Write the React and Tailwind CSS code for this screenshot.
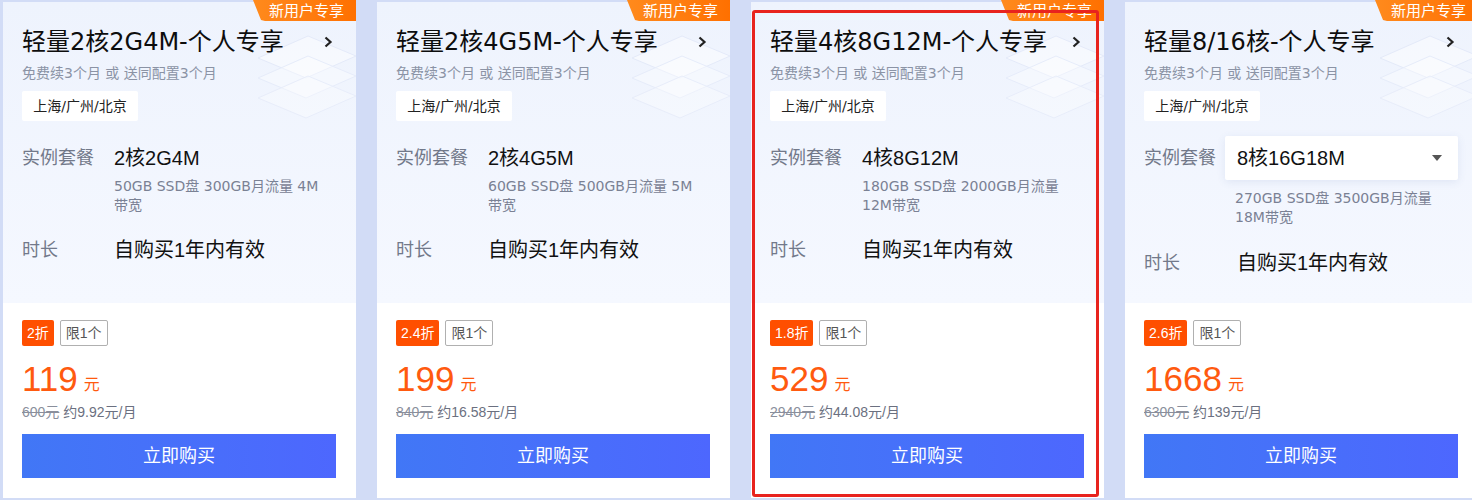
import React from "react";

const plans = [
  {
    title: "轻量2核2G4M-个人专享",
    spec: "2核2G4M",
    desc: "50GB SSD盘 300GB月流量 4M 带宽",
    discount: "2折",
    price: "119",
    orig: "600元",
    monthly: "约9.92元/月",
  },
  {
    title: "轻量2核4G5M-个人专享",
    spec: "2核4G5M",
    desc: "60GB SSD盘 500GB月流量 5M 带宽",
    discount: "2.4折",
    price: "199",
    orig: "840元",
    monthly: "约16.58元/月",
  },
  {
    title: "轻量4核8G12M-个人专享",
    spec: "4核8G12M",
    desc: "180GB SSD盘 2000GB月流量 12M带宽",
    discount: "1.8折",
    price: "529",
    orig: "2940元",
    monthly: "约44.08元/月",
    selected: true,
  },
  {
    title: "轻量8/16核-个人专享",
    spec: "8核16G18M",
    desc: "270GB SSD盘 3500GB月流量 18M带宽",
    discount: "2.6折",
    price: "1668",
    orig: "6300元",
    monthly: "约139元/月",
    dropdown: true,
  },
];

// wide latin face, closer to the reference's metrics for small text
const wide = "font-['DejaVu_Sans','Noto_Sans_CJK_SC',sans-serif]";

function Decoration() {
  // faint stacked server plates behind the title
  return (
    <svg className="absolute right-0 top-[22px]" width="112" height="100" viewBox="0 0 112 100" fill="none">
      <path d="M14 34 L64 12 L112 32 L62 54 Z" fill="#ffffff" fillOpacity="0.45" stroke="#e4eaf9" />
      <path d="M14 54 L64 32 L112 52 L62 74 Z" fill="#ffffff" fillOpacity="0.35" stroke="#e6ecfa" />
      <path d="M14 74 L64 52 L112 72 L62 94 Z" fill="#ffffff" fillOpacity="0.3" stroke="#e8edfa" />
    </svg>
  );
}

function PlanCard({ plan }) {
  return (
    <div className="relative w-[353px] h-[496px] shrink-0 bg-white flex flex-col">
      {/* Top: config */}
      <div className="relative h-[301px] bg-gradient-to-b from-[#eef3fd] to-[#f5f8ff] pl-[19px] pr-[20px] pt-[22px] overflow-hidden">
        <Decoration />
        <div className="relative flex items-center justify-between h-[36px]">
          <span className={`${wide} text-[24px] leading-[36px] text-[#0d0d0d]`}>{plan.title}</span>
          <svg width="10" height="12" viewBox="0 0 10 12" className="mr-[3px]">
            <path d="M2.5 1.5 L7.5 6 L2.5 10.5" stroke="#222" strokeWidth="2.2" fill="none" />
          </svg>
        </div>
        <div className={`${wide} relative mt-[3px] text-[14px] leading-[20px] text-[#8b93a5]`}>
          免费续3个月 或 送同配置3个月
        </div>
        <div className={`${wide} relative mt-[8px] w-[116px] h-[30px] flex items-center justify-center bg-white rounded-[2px] text-[14px] text-[#222]`}>
          上海/广州/北京
        </div>

        {plan.dropdown ? (
          <div className="relative mt-[15px] flex">
            <div className="w-[81px] pt-[9px] text-[18px] leading-[26px] text-[#72798a]">实例套餐</div>
            <div className="flex-1">
              <div className="h-[44px] flex items-center justify-between px-3 bg-white rounded-[2px] shadow-[0_2px_8px_rgba(60,90,160,0.10)]">
                <span className="text-[20px] text-[#111]">{plan.spec}</span>
                <svg width="10" height="6" viewBox="0 0 10 6" className="mr-[4px]">
                  <path d="M0 0 L10 0 L5 6 Z" fill="#555" />
                </svg>
              </div>
              <div className={`${wide} break-keep mt-[9px] px-[10px] text-[14px] leading-[19px] text-[#7a8194]`}>{plan.desc}</div>
            </div>
          </div>
        ) : (
          <div className="relative mt-[24px] flex">
            <div className="w-[92px] shrink-0 text-[18px] leading-[26px] text-[#72798a]">实例套餐</div>
            <div className="flex-1">
              <div className="text-[20px] leading-[26px] text-[#111]">{plan.spec}</div>
              <div className={`${wide} break-keep mt-[6px] text-[14px] leading-[19px] text-[#7a8194]`}>{plan.desc}</div>
            </div>
          </div>
        )}

        <div className={`relative flex ${plan.dropdown ? "mt-[23px]" : "mt-[22px]"}`}>
          <div className={`${plan.dropdown ? "w-[93px]" : "w-[92px]"} shrink-0 text-[18px] leading-[26px] text-[#72798a]`}>时长</div>
          <div className="text-[20px] leading-[26px] text-[#111]">自购买1年内有效</div>
        </div>
      </div>

      {/* Bottom: price */}
      <div className="flex-1 pl-[19px] pr-[20px] pt-[17px]">
        <div className="flex gap-[6px]">
          <span className="h-[26px] px-[5px] flex items-center rounded-[2px] bg-[#ff4f00] text-white text-[14px]">
            {plan.discount}
          </span>
          <span className="h-[26px] px-[5px] flex items-center rounded-[2px] border border-[#b0b0b0] text-[#555] text-[14px]">
            限1个
          </span>
        </div>
        <div className="mt-[13px] flex items-end h-[40px]">
          <span className="text-[35px] leading-[40px] text-[#ff5a0f]">{plan.price}</span>
          <span className="ml-[6px] mb-[4px] text-[16px] leading-[20px] text-[#ff5a0f]">元</span>
        </div>
        <div className="mt-[4px] text-[14px] leading-[18px] text-[#6b7080]">
          <span className="line-through text-[#8a8f9c]">{plan.orig}</span> {plan.monthly}
        </div>
        <button className="mt-[13px] w-full h-[44px] bg-gradient-to-r from-[#4177f6] to-[#4d67fe] text-white text-[18px]">
          立即购买
        </button>
      </div>

      {/* Badge */}
      <div className="absolute right-0 top-[-2px] w-[103px] h-[21px] flex items-center justify-end pr-[12px] bg-gradient-to-r from-[#ff8a1c] to-[#ff7000] [clip-path:polygon(0_0,100%_0,100%_100%,12px_100%,8px_95%)] text-white text-[15px] leading-[21px]">
        新用户专享
      </div>

      {plan.selected && (
        <div className="absolute left-[1px] top-[8px] w-[347px] h-[487px] border-[3px] border-[#e8231e] rounded-[3px] pointer-events-none" />
      )}
    </div>
  );
}

export default function App() {
  return (
    <div className="w-[1472px] h-[500px] overflow-hidden bg-[#d2dcf6] font-['Liberation_Sans','Noto_Sans_CJK_SC',sans-serif]">
      <div className="flex gap-[21px] pl-[3px] pt-[2px]">
        {plans.map((plan) => (
          <PlanCard key={plan.title} plan={plan} />
        ))}
      </div>
    </div>
  );
}
